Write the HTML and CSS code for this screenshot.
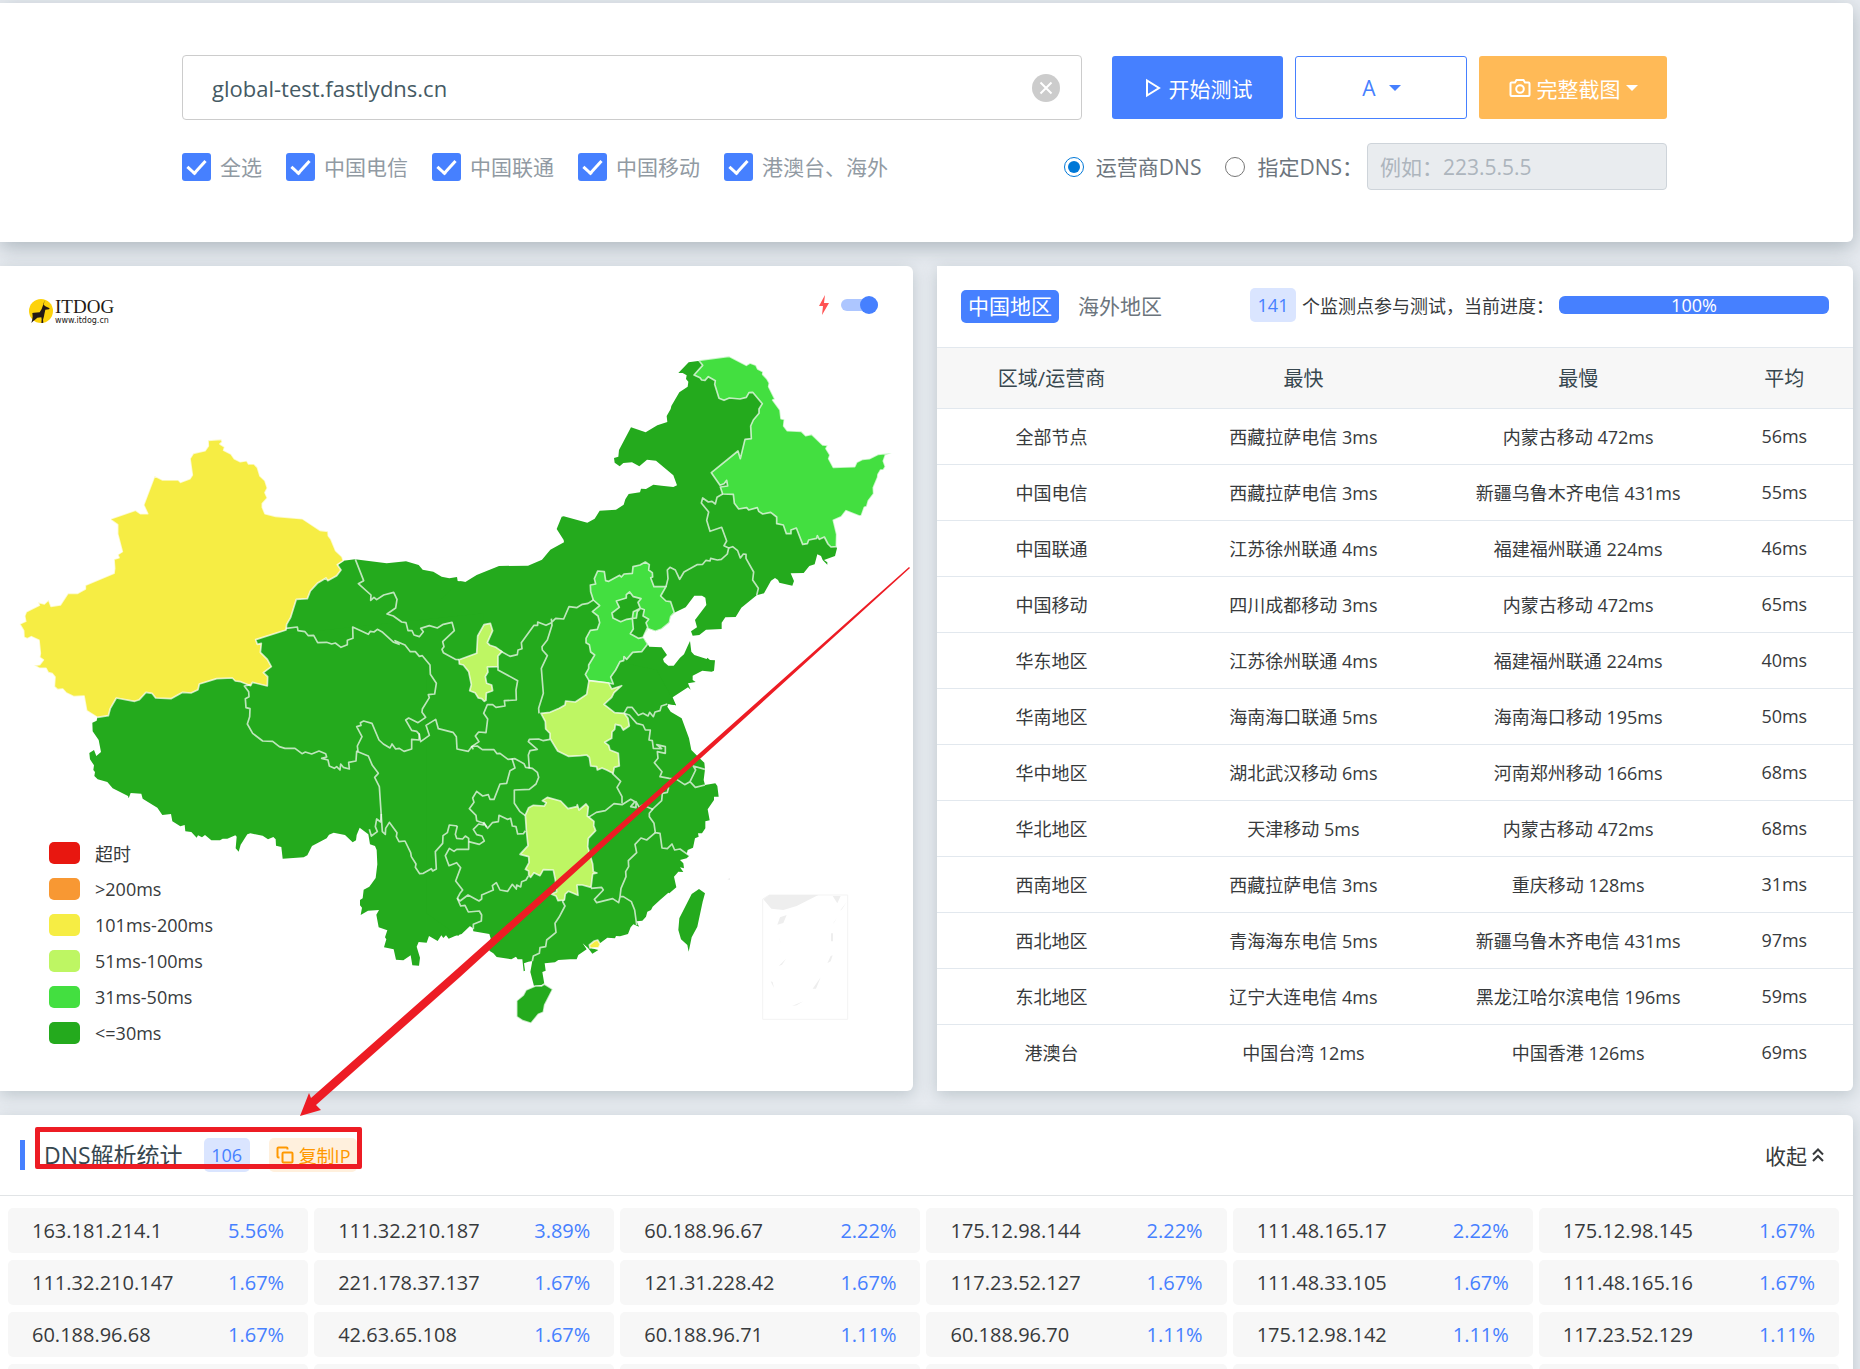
FILE: index.html
```html
<!doctype html>
<html lang="zh-CN">
<head>
<meta charset="utf-8">
<title>DNS测试 - ITDOG</title>
<link rel="stylesheet" href="styles.css">
</head>

<body>
<div class="page">

<form class="card search">
	<div class="row">
		<div class="host">
			<input type="text" class="host-input" value="global-test.fastlydns.cn" aria-label="域名">
			<button type="button" class="clear" aria-label="清空"><svg viewBox="0 0 28 28"><circle cx="14" cy="14" r="14"/><path d="M8.500 8.500l11 11M19.500 8.500l-11 11"/></svg></button>
		</div>
		<div class="btns">
			<button type="button" class="btn start"><svg class="ico" viewBox="0 0 20 20"><path d="M4 2.500v15l12-7.500z"/></svg>开始测试</button>
			<div class="type">
				<select aria-label="记录类型"><option>A</option></select>
				<svg class="caret" viewBox="0 0 12 6"><path d="M0 0h12L6 6z"/></svg>
			</div>
			<button type="button" class="btn shot"><svg class="ico" viewBox="0 0 22 20"><path d="M1.500 5.500a1 1 0 0 1 1-1H6L7.500 2h7L16 4.500h3.500a1 1 0 0 1 1 1V17a1 1 0 0 1-1 1h-17a1 1 0 0 1-1-1z"/><circle cx="11" cy="11" r="3.800"/></svg>完整截图<svg class="caret" viewBox="0 0 12 6"><path d="M0 0h12L6 6z"/></svg></button>
		</div>
	</div>
	<div class="row options">
		<div class="checks">
			<label><input type="checkbox" checked>全选</label>
			<label><input type="checkbox" checked>中国电信</label>
			<label><input type="checkbox" checked>中国联通</label>
			<label><input type="checkbox" checked>中国移动</label>
			<label><input type="checkbox" checked>港澳台、海外</label>
		</div>
		<div class="dns">
			<label><input type="radio" name="dns" checked>运营商DNS</label>
			<label><input type="radio" name="dns">指定DNS：</label>
			<input type="text" class="dns-input" placeholder="例如：223.5.5.5" aria-label="指定DNS" disabled>
		</div>
	</div>
</form>

<div class="cols">
	<div class="card map">
		<div class="map-top">
			<div class="logo">
				<svg viewBox="0 0 72 72"><circle cx="36" cy="36" r="36" fill="#fdd20a"/><path d="M47 3l-3 14 5 5 13 6-2 3-11 1-3 14-1 6-3 10 1 9-6 2 1-12-1-6-12 1-7 6-5 4-6 6 3-11 1-9-1-10 5-1 17-1 6-10 4-11z" fill="#231815"/></svg>
				<div class="logo-text"><b>ITDOG</b><span>www.itdog.cn</span></div>
			</div>
			<label class="speed">
				<svg viewBox="0 0 10 20"><path d="M6 0L0 11h4l-1 9 7-12H5z"/></svg>
				<input type="checkbox" aria-label="极速模式" checked>
			</label>
		</div>
		<svg class="china" viewBox="0 1020 2739 2253">
			<!-- mainland -->
			<g class="land c30">
				<path transform="translate(0 780)" d="M1030 902L1065 898 1160 910 1218 904 1256 915 1268 929 1300 935 1325 950 1348 955 1371 951 1373 963 1396 966 1500 1000 1500 1500 340 1480 292 1372 500 1200 900 1000z"/>
				<path transform="translate(1380 1020)" d="M0 724L16 726 50 705 117 678 204 677 246 659 271 629 312 607 311 600 290 567 305 530 311 529 382 548 404 536 419 512 468 509 491 494 496 478 506 462 540 457 543 446 558 447 580 434 605 437 640 441 651 436 640 406 588 362 561 359 538 379 516 367 490 369 479 379 464 368 462 354 475 350 477 330 513 262 557 277 592 256 622 246 620 228 632 207 634 198 658 157 683 140 685 125 678 117 680 106 668 99 655 99 686 67 714 63 780 62 900 150 930 230 1080 420 1129 620 1131 625 1125 648 1092 660 1102 667 1102 674 1088 660 1083 648 1072 643 1064 673 1048 678 1031 699 992 700 1002 723 997 737 958 728 954 720 945 714 933 722 912 760 890 766 844 803 827 831 796 832 785 848 785 867 738 869 718 885 698 887 693 874 711 862 705 840 739 795 736 773 726 767 703 767 677 802 646 817 632 830 628 848 605 867 586 874 565 866 549 890 563 912 568 920 605 922 621 945 609 957 612 966 625 977 641 977 660 953 672 943 682 920 690 903 694 935 703 945 740 957 742 953 750 960 765 961 762 992 755 995 727 992 698 1007 698 1020 707 1026 684 1030 692 1049 684 1042 638 1072 648 1096 625 1092 600 1130 -60 1130 -60 780z"/>
				<path transform="translate(0 2040)" d="M292 111L290 122 277 128 278 154 296 180 303 216 289 228 282 210 268 219 270 238 282 256 280 270 285 276 283 288 293 298 322 306 338 325 384 348 386 355 392 339 424 341 428 356 472 383 487 405 513 402 517 424 541 439 554 435 556 454 574 456 590 473 594 466 606 472 615 465 634 481 660 481 668 476 682 476 706 466 710 470 707 505 716 515 722 494 742 463 751 460 788 467 804 478 820 471 827 478 828 497 844 501 848 536 911 532 922 526 936 498 980 475 987 464 1001 458 1035 465 1058 487 1068 481 1070 465 1079 443 1105 463 1110 493 1125 498 1130 510 1132 553 1127 594 1108 620 1091 629 1088 655 1080 660 1080 676 1086 683 1082 705 1104 692 1137 690 1129 704 1136 742 1162 751 1155 772 1159 778 1152 802 1181 808 1188 839 1210 841 1232 826 1237 856 1257 857 1260 833 1250 800 1256 786 1280 788 1287 768 1313 783 1324 766 1330 774 1338 766 1346 776 1365 768 1385 762 1450 700 1450 -200 500 -100z"/>
				<path transform="translate(1380 2040)" d="M-5 768L8 745 25 735 38 744 40 754 88 762 92 775 88 812 100 820 110 831 154 838 168 830 173 838 187 838 191 874 195 872 192 850 205 845 217 843 211 876 222 918 246 915 253 912 247 876 257 872 254 850 285 847 295 840 330 838 350 838 355 825 380 808 368 790 384 804 397 821 415 810 395 805 420 790 442 773 465 775 468 768 480 769 504 762 512 742 520 733 537 740 530 724 547 722 558 710 562 695 573 690 578 680 600 660 625 638 628 640 649 622 642 590 655 575 670 576 660 562 672 565 670 550 660 540 680 535 688 527 680 522 683 510 699 503 705 475 716 470 714 460 726 460 736 445 736 424 749 421 743 388 762 360 762 350 776 350 772 318 766 310 735 315 731 300 735 268 733 248 709 225 694 210 687 175 665 115 632 95 622 80 625 72 648 76 590 -30 450 -60 -100 -60 -100 700z"/>
			</g>
			<!-- Xinjiang -->
			<path class="c200" transform="translate(0 780)" d="M624 541L664 538 667 546 660 552 674 561 671 571 693 582 703 596 721 605 740 602 746 612 762 612 772 622 780 648 795 662 802 684 795 698 802 714 787 731 787 742 795 761 827 769 907 776 960 811 984 814 985 827 993 838 1007 872 1026 890 1030 902 1012 914 1023 930 1010 947 983 962 978 954 952 970 931 993 922 1016 889 1018 872 1072 860 1093 858 1110 767 1139 772 1153 784 1150 781 1177 802 1198 814 1220 790 1238 803 1250 802 1278 757 1267 752 1277 722 1265 706 1263 697 1254 650 1256 598 1272 594 1289 573 1299 548 1297 513 1316 467 1314 456 1300 438 1297 418 1319 404 1324 349 1314 331 1345 325 1367 292 1372 260 1352 252 1308 222 1310 199 1299 188 1287 173 1289 163 1280 165 1251 157 1241 145 1238 138 1225 118 1225 102 1216 119 1214 130 1200 119 1192 121 1180 117 1141 94 1130 82 1136 72 1132 71 1112 59 1092 77 1084 74 1068 79 1055 118 1036 114 1027 133 1032 146 1020 153 1039 181 1035 204 1000 233 1000 256 987 256 976 342 940 344 925 342 898 357 893 353 884 367 875 353 822 353 794 333 780 333 776 407 751 421 761 443 761 431 735 464 648 488 660 535 660 542 667 570 656 577 645 570 596 580 580 615 572 625 558z"/>
			<g transform="translate(1380 1020)">
				<!-- Heilongjiang, Hebei, Beijing, Tianjin -->
				<path class="c50" d="M716 61L807 49 859 76 870 69 888 76 893 87 909 95 908 103 921 117 928 129 926 140 945 178 938 180 944 188 960 210 963 236 973 238 971 258 982 272 1024 274 1037 287 1055 283 1088 315 1103 316 1098 326 1110 345 1106 356 1120 382 1184 380 1190 367 1208 358 1228 356 1255 343 1295 339 1276 346 1270 363 1276 380 1270 390 1262 390 1254 403 1253 412 1240 443 1241 461 1225 482 1220 500 1213 502 1204 527 1198 528 1158 512 1144 530 1120 541 1130 583 1129 620 1113 621 1104 612 1093 591 1078 598 1072 587 1070 595 1046 600 1042 611 1028 613 1009 564 993 570 993 581 979 581 970 555 950 551 950 531 932 517 908 522 896 514 892 503 866 510 860 503 836 507 823 490 820 463 788 462 781 441 803 438 800 421 792 431 780 436 754 398 834 333 841 356 855 298 874 296 872 258 880 240 897 220 897 207 907 191 878 157 867 158 859 172 840 177 808 174 792 181 777 175 764 133 766 122 745 110 735 121 725 120 720 113 702 105 728 76z"/>
				<path class="c50" d="M413 693L433 695 437 722 446 724 479 706 484 711 492 702 517 700 519 680 540 675 556 666 568 674 566 690 577 698 578 711 572 713 582 740 618 740 602 768 618 783 632 785 643 818 632 830 628 848 605 867 586 874 565 866 549 890 563 912 545 935 518 937 500 958 492 950 491 962 480 965 467 990 452 1011 460 1032 446 1029 387 1022 376 1003 386 985 386 975 404 945 392 936 388 914 378 908 378 895 391 871 412 868 419 848 414 828 397 815 419 797 400 780 392 755 391 735 407 732 403 716z"/>
				<path class="c30 line" d="M509 756L520 770 543 776 534 787 541 805 520 815 517 835 500 838 482 845 459 834 456 819 478 802 469 783 499 774 499 764zM541 805L553 809 549 828 566 838 558 848 563 862 549 892 535 895 511 881 520 867 517 835 529 834 532 815z"/>
				<path class="line" d="M788 462L771 472 766 492 756 484 745 486 728 474 724 489 746 516 740 541 750 574 785 562 800 603 792 617 806 624 802 642 784 658 772 660 752 655 750 663 738 661 728 673 711 674 672 696 659 718 646 690 630 682 622 690 624 716 618 740"/>
				<path class="line" d="M806 624L818 620 833 632 841 654 850 642 858 643 858 655 881 696 878 720 895 745 890 766"/>
				<path class="line" d="M400 780L384 790 367 793 350 803 327 800 311 837 287 835 274 848 258 856 233 846 233 856 222 856 184 908 186 926 174 930 172 944 150 949 120 932M274 836L276 856 262 900 246 920 247 930 262 947 244 985 250 1060 236 1105 237 1120"/>
			</g>
			<!-- Gansu, Qinghai, Shaanxi, Sichuan, Chongqing -->
			<g transform="translate(810 1620)">
				<path class="line" d="M684 380L684 390 743 422 738 450 739 480 703 482 705 498 678 502 668 494 652 494 641 520 653 537 648 578 626 576 616 588 627 605 605 620 610 628"/>
				<path class="line" d="M256 58L281 122 265 131 303 165 302 181 312 172 320 179 341 165 371 157 381 178 377 204 351 222 370 228 395 246 408 248 414 272 426 272 432 285 448 290 460 275 452 265 478 257 502 264 520 253 546 247 553 272 518 305 522 320 516 328 520 338 556 358 567 359"/>
				<path class="line" d="M48 265L82 261 84 272 105 275 115 287 131 286 143 308 170 307 185 312 196 309 213 322 232 314 232 301 249 295 248 261 295 283 301 274 312 276 322 268 338 277 371 307 387 313 375 302 405 315 421 335 436 335 448 349 457 347 480 375 481 403 499 430 494 462 475 464 478 473 457 507 456 517 467 532 444 548 416 534 407 540 425 571 440 574 448 583 447 600 425 598 425 627 402 634 388 625 377 627 366 612 360 624 340 612 327 600 306 550 281 543 271 548 273 556 260 560 276 590 262 618 264 634"/>
				<path class="line" d="M447 580L452 605 478 586 468 556 497 538 505 566 549 577 559 590 561 627 595 634 605 620 622 618 637 629 672 629 681 641 690 640 714 658 735 656 762 671 767 682 787 685 802 697 806 712 798 732 778 748 733 750 733 790 750 815 766 827"/>
				<path class="line" d="M726 656L735 684 720 692 710 730 690 732 672 778 660 778 655 764 638 768 620 754 608 774 612 787 598 806 618 826 620 842 641 850 650 862M840 598L820 602 806 597 778 598 775 605 802 628 780 632 775 645 778 685"/>
				<path class="c100" d="M567 359L620 340 623 288 642 254 661 250 668 272 652 308 660 316 678 322 696 335 684 348 684 380 652 381 654 396 646 410 650 430 665 435 668 452 649 459 648 481 643 484 635 476 625 474 615 458 599 452 604 434 596 395 580 375 568 372z"/>
			</g>
			<!-- Tibet -->
			<path class="line" transform="translate(0 2040)" d="M752 14L733 18 746 35 747 50 736 56 738 83 750 86 749 110 742 132 758 160 788 183 818 184 838 200 855 205 885 205 906 221 916 216 935 222 957 213 977 221 980 231 965 235 984 240 988 258 1003 265 1010 260 1020 270 1022 252 1030 262 1048 267 1046 247 1068 243 1070 214 1105 228 1117 256 1135 280 1124 292 1138 320 1147 455 1156 463 1157 445 1168 427 1191 458 1189 470 1197 485 1215 483 1232 518 1234 530 1248 552 1246 562 1259 581 1270 580 1294 566 1298 573 1309 567 1306 515 1328 490 1329 467 1342 458 1348 435 1372 438"/>
			<!-- Yunnan, Guizhou -->
			<g class="line" transform="translate(1050 2370)">
				<path d="M94 72L92 96 80 87 76 110 82 125 64 138 58 118M322 108L316 133 320 145 338 147 346 138 356 145 356 178 320 178 312 184 298 175 286 197 297 227 320 218 332 233 317 273 338 300 330 310 322 325 330 333 354 315 387 333 395 327 395 315 430 300 427 287 439 278 450 300 473 304 487 283 499 297 500 285 512 291 515 275 528 270 535 258"/>
				<path d="M356 155L388 163 403 153 396 138 380 134 370 118 386 102 400 105 402 98 413 115 427 98 445 95 447 76 472 88 482 85 487 108 498 110 503 132 520 131 526 122M322 325L332 348 345 346 355 366 388 363 395 375 394 393 370 403 370 418"/>
			</g>
			<g transform="translate(1380 2040)">
				<path class="line" d="M313 655L308 665 315 678 297 712 285 730 288 757 260 780 257 800 240 803 238 820 220 828 217 843M457 280L482 304 471 322 486 350 486 370M385 412L409 397 436 392 462 371 486 374 512 358 525 365 512 380 528 383 528 365 538 382 548 375 578 388 568 400 568 410 582 430 586 458 600 460 606 504 622 506 636 492 644 510 660 507 688 527"/>
				<path class="line" d="M575 390L605 362 607 340 622 337 626 322M586 458L560 480 543 474 525 493 530 518 505 542 506 560 497 575 498 590 483 625 480 650 490 650 514 665 524 690 530 735M393 625L425 622 430 630 403 658 410 668 458 656 476 668 480 650"/>
				<path class="line" d="M492 100L508 105 530 130 549 135 556 150 571 150 567 180 577 182 580 205 605 206 590 194 616 200 616 220 592 215 594 235 583 248 606 275 600 290 628 295 650 298 674 314 690 305 706 322 735 315M492 100L502 82 516 82 535 106 549 100 564 108 569 97 580 110 585 96 600 92 604 78 622 72M690 305L707 270 700 258 735 268"/>
				<path class="c100" d="M243 100L270 97 298 85 315 75 317 63 346 66 380 43 387 2 446 9 455 27 485 17 462 38 455 52 432 73 464 98 492 100 504 115 508 138 490 150 482 137 466 133 464 148 456 156 455 175 434 187 446 196 450 210 475 220 478 258 463 262 459 280 440 270 426 264 412 270 410 260 392 258 388 232 380 225 362 227 325 229 293 213 270 175 270 160 257 147 256 125z"/>
				<path class="c100" d="M247 362L262 352 302 363 324 386 350 380 352 374 357 390 378 372 385 381 382 408 402 424 401 437 407 452 385 475 383 500 398 552 400 575 411 579 398 582 393 622 367 615 351 615 354 646 340 640 325 634 316 642 313 660 294 662 288 648 274 642 290 635 286 600 280 570 250 569 240 587 222 578 212 592 206 585 206 573 196 568 207 548 206 530 180 523 204 497 199 450 196 405 206 383 220 376 253 378 259 368z"/>
				<!-- Hainan, Taiwan, Hong Kong -->
				<path class="c30 line" d="M253 912L278 928 254 975 250 997 235 1003 213 1030 188 1022 170 1010 170 962 190 945 198 930 226 918 244 918z"/>
				<path class="c30" d="M717 627L735 640 728 665 712 740 695 772 686 815 682 795 663 778 655 750 658 715 695 642z"/>
				<path class="c200" d="M403 783L413 780 421 793 416 803 390 804 388 795z"/>
				<!-- South China Sea box -->
				<path class="sea-box" d="M908 657L928 645H1163V1018H908z"/>
				<path class="sea" d="M910 658L928 645H1075L1010 678 970 690 934 686zM1118 648h24l-10 22zM960 712l20-7-10 24-18 5zM1113 760h6v24h-6zM1140 692l20-26-14 22zM1118 732l14-20-10 16zM956 770l10 28-7-18zM956 858l22-22-12 18zM1102 850l10-22 6-2-6 18zM932 904l6 2 4 18zM1058 926l24-34-14 34zM996 978l34-14-20 12zM802 598l8-4v6z"/>
			</g>
		</svg>
		<ul class="legend">
			<li><i class="l-timeout"></i>超时</li>
			<li><i class="l-over"></i>&gt;200ms</li>
			<li><i class="l-200"></i>101ms-200ms</li>
			<li><i class="l-100"></i>51ms-100ms</li>
			<li><i class="l-50"></i>31ms-50ms</li>
			<li><i class="l-30"></i>&lt;=30ms</li>
		</ul>
	</div>

	<div class="card result">
		<div class="result-top">
			<a href="#china" class="tab active">中国地区</a>
			<a href="#oversea" class="tab">海外地区</a>
			<div class="status">
				<span class="badge">141</span>
				<span class="status-text">个监测点参与测试，当前进度：</span>
				<div class="progress"><div class="bar" style="width:100%">100%</div></div>
			</div>
		</div>
		<table>
			<thead>
				<tr><th class="c-area">区域/运营商</th><th class="c-fast">最快</th><th class="c-slow">最慢</th><th class="c-avg">平均</th></tr>
			</thead>
			<tbody>
				<tr><td>全部节点</td><td>西藏拉萨电信 3ms</td><td>内蒙古移动 472ms</td><td>56ms</td></tr>
				<tr><td>中国电信</td><td>西藏拉萨电信 3ms</td><td>新疆乌鲁木齐电信 431ms</td><td>55ms</td></tr>
				<tr><td>中国联通</td><td>江苏徐州联通 4ms</td><td>福建福州联通 224ms</td><td>46ms</td></tr>
				<tr><td>中国移动</td><td>四川成都移动 3ms</td><td>内蒙古移动 472ms</td><td>65ms</td></tr>
				<tr><td>华东地区</td><td>江苏徐州联通 4ms</td><td>福建福州联通 224ms</td><td>40ms</td></tr>
				<tr><td>华南地区</td><td>海南海口联通 5ms</td><td>海南海口移动 195ms</td><td>50ms</td></tr>
				<tr><td>华中地区</td><td>湖北武汉移动 6ms</td><td>河南郑州移动 166ms</td><td>68ms</td></tr>
				<tr><td>华北地区</td><td>天津移动 5ms</td><td>内蒙古移动 472ms</td><td>68ms</td></tr>
				<tr><td>西南地区</td><td>西藏拉萨电信 3ms</td><td>重庆移动 128ms</td><td>31ms</td></tr>
				<tr><td>西北地区</td><td>青海海东电信 5ms</td><td>新疆乌鲁木齐电信 431ms</td><td>97ms</td></tr>
				<tr><td>东北地区</td><td>辽宁大连电信 4ms</td><td>黑龙江哈尔滨电信 196ms</td><td>59ms</td></tr>
				<tr><td>港澳台</td><td>中国台湾 12ms</td><td>中国香港 126ms</td><td>69ms</td></tr>
			</tbody>
		</table>
	</div>
</div>

<div class="card stat">
	<div class="stat-top">
		<h2>DNS解析统计</h2>
		<span class="badge">106</span>
		<button type="button" class="copy"><svg viewBox="0 0 18 18"><path d="M7.500 6.500h8a1 1 0 0 1 1 1v8a1 1 0 0 1-1 1h-8a1 1 0 0 1-1-1v-8a1 1 0 0 1 1-1zM3.500 11.500h-1a1 1 0 0 1-1-1v-8a1 1 0 0 1 1-1h8a1 1 0 0 1 1 1v1"/></svg>复制IP</button>
		<button type="button" class="fold">收起<svg viewBox="0 0 12 14"><path d="M1 6.500l5-5 5 5M1 13l5-5 5 5"/></svg></button>
		<div class="mark"></div>
	</div>
	<ul class="ips">
		<li>163.181.214.1<span>5.56%</span></li>
		<li>111.32.210.187<span>3.89%</span></li>
		<li>60.188.96.67<span>2.22%</span></li>
		<li>175.12.98.144<span>2.22%</span></li>
		<li>111.48.165.17<span>2.22%</span></li>
		<li>175.12.98.145<span>1.67%</span></li>
		<li>111.32.210.147<span>1.67%</span></li>
		<li>221.178.37.137<span>1.67%</span></li>
		<li>121.31.228.42<span>1.67%</span></li>
		<li>117.23.52.127<span>1.67%</span></li>
		<li>111.48.33.105<span>1.67%</span></li>
		<li>111.48.165.16<span>1.67%</span></li>
		<li>60.188.96.68<span>1.67%</span></li>
		<li>42.63.65.108<span>1.67%</span></li>
		<li>60.188.96.71<span>1.11%</span></li>
		<li>60.188.96.70<span>1.11%</span></li>
		<li>175.12.98.142<span>1.11%</span></li>
		<li>117.23.52.129<span>1.11%</span></li>
		<li></li>
		<li></li>
		<li></li>
		<li></li>
		<li></li>
		<li></li>
	</ul>
</div>

<svg class="arrow" viewBox="0 0 610 550"><path d="M610 1L609 0 157 402 11 531 9 526 0 549 21 543 16 538 160 410z"/></svg>
</div>
</body>
</html>
```
FILE: styles.css
```css
*{margin:0;padding:0;box-sizing:border-box;list-style:none;}
body{background:#e7ebf0;color:#373a3c;font-family:"Open Sans","Noto Sans CJK SC",sans-serif;font-size:18px;}
input,select,button{font-family:inherit;font-size:21px;}
button{cursor:pointer;border:0;background:none;}
a{text-decoration:none;}

.page{position:relative;height:100vh;overflow:hidden;padding:3px 7px 0 0;}
.card{background:#fff;border-radius:0 6px 6px 0;box-shadow:0 4px 16px 0 rgba(69,90,100,.25);}

/* search */
.search{padding:52px 186px 52px 182px;margin-bottom:24px;box-shadow:0 6px 20px 0 rgba(69,90,100,.35);}
.row{display:flex;align-items:center;justify-content:space-between;gap:30px;}
.host{position:relative;flex:1;}
.host-input{display:block;width:100%;height:65px;padding:0 80px 0 29px;border:1px solid #ccc;border-radius:4px;color:#455a64;font-size:22px;outline:0;}
.clear{position:absolute;right:22px;top:19px;width:28px;height:28px;}
.clear svg{display:block;}
.clear circle{fill:#ccc;}
.clear path{stroke:#fff;stroke-width:2;}
.btns{display:flex;gap:12px;}
.btn{display:flex;align-items:center;justify-content:center;height:63px;border-radius:3px;color:#fff;}
.start{width:171px;background:#4680ff;}
.shot{width:188px;background:#ffba57;}
.ico{height:20px;margin-right:6px;fill:none;stroke:#fff;stroke-width:2;}
.caret{width:12px;height:6px;fill:#4680ff;}
.shot .caret{margin-left:5px;fill:#fff;}
.type{position:relative;width:172px;}
.type select{width:100%;height:63px;padding-right:24px;border:1px solid #4680ff;border-radius:3px;background:#fff;color:#4680ff;appearance:none;text-align:center;text-align-last:center;}
.type .caret{position:absolute;right:66px;top:29px;}

.options{margin-top:23px;}
.checks,.dns{display:flex;align-items:center;gap:24px;font-size:21px;}
.checks{color:#919aa3;}
.checks label,.dns label{display:flex;align-items:center;line-height:32px;}
.checks input{appearance:none;width:29px;height:28px;margin-right:9px;border-radius:3px;background:#4680ff;display:grid;place-items:center;}
.checks input:before{content:"";width:8px;height:15px;margin-bottom:4px;border:solid #fff;border-width:0 3px 3px 0;transform:rotate(42deg);}
.dns{color:#6c757d;}
.dns label input{width:20px;height:20px;margin-right:12px;accent-color:#0078d7;}
.dns-input{width:300px;height:47px;margin-left:-20px;padding:0 12px;border:1px solid #ced4da;border-radius:4px;background:#e9ecef;}
.dns-input::placeholder{color:#adb5bd;}

/* map */
.cols{display:grid;grid-template-columns:913fr 916fr;gap:24px;margin-bottom:24px;}
.map{position:relative;}
.map-top{display:flex;justify-content:space-between;height:74px;padding:30px 35px 0 29px;}
.logo{display:flex;height:30px;align-items:center;gap:2px;}
.logo svg{width:24px;height:24px;}
.logo-text b,.logo-text span{display:block;color:#231815;}
.logo-text b{font:19px/20px "Liberation Serif",serif;}
.logo-text span{font:8px/8px "DejaVu Sans",sans-serif;}
.speed{display:flex;align-items:center;gap:12px;height:18px;}
.speed svg{width:10px;height:20px;fill:#ff5252;}
.speed input{appearance:none;display:flex;align-items:center;justify-content:flex-end;width:37px;height:12px;border-radius:6px;background:#adc6ff;}
.speed input:before{content:"";width:18px;height:18px;border-radius:50%;background:#4680ff;flex:none;}
.china{display:block;width:100%;}
.china path{stroke-linejoin:round;}
.c30{fill:#24aa1d;}
.c50,.c100,.c200,.line{stroke:rgba(255,255,255,.7);stroke-width:5;}
.c50{fill:#43df40;}
.c100{fill:#bef663;}
.c200{fill:#f6ed44;}
.line:not(.c30){fill:none;}
.sea-box{fill:none;stroke:#f3f3f3;stroke-width:3;}
.sea{fill:#eee;}
.legend{position:absolute;left:49px;bottom:40px;}
.legend li{display:flex;align-items:center;height:36px;gap:15px;}
.legend i{width:31px;height:22px;border-radius:5px;}
.l-timeout{background:#e81710;}
.l-over{background:#f89833;}
.l-200{background:#f6ed44;}
.l-100{background:#bef663;}
.l-50{background:#43df40;}
.l-30{background:#24aa1d;}

/* result */
.result-top{display:flex;align-items:center;height:81px;padding:0 24px;}
.tab{height:33px;margin-right:12px;padding:0 7px;border-radius:5px;color:#6c757d;font-size:21px;line-height:32px;}
.tab.active{background:#4680ff;color:#fff;}
.status{display:flex;align-items:center;margin:0 0 3px auto;}
.badge{width:46px;height:34px;border-radius:5px;background:#dae5ff;color:#4680ff;line-height:34px;text-align:center;}
.status-text{margin:0 5px 0 6px;}
.progress{width:270px;height:18px;border-radius:6px;background:#e9ecef;}
.bar{height:18px;border-radius:6px;background:#4680ff;color:#fff;line-height:18px;text-align:center;}
table{width:100%;border-collapse:collapse;table-layout:fixed;text-align:center;}
th{height:61px;padding-bottom:2px;border:solid #e2e8ee;border-width:1px 0;background:#f7f7f7;color:#37474f;font-size:20px;font-weight:400;}
td{height:56px;padding-bottom:2px;border-bottom:1px solid #e2e8ee;}
tr:last-child td{border-bottom:0;}
.c-area{width:25%;}
.c-fast{width:30%;}
.c-slow{width:30%;}
.c-avg{width:15%;}

/* dns stat */
.stat-top{position:relative;display:flex;align-items:center;height:81px;padding:0 29px 0 20px;border-bottom:1px solid #e1e4e6;}
.stat-top h2{padding-left:19px;margin-right:21px;border-left:5px solid #4680ff;color:#37474f;font-size:23px;font-weight:400;line-height:30px;}
.copy{display:flex;align-items:center;gap:5px;height:34px;margin-left:19px;padding:0 7px;border-radius:5px;background:#fff0dd;color:#ff9800;font-size:18px;}
.copy svg{width:18px;height:18px;fill:none;stroke:#ff9800;stroke-width:2;}
.fold{display:flex;align-items:center;gap:5px;margin-left:auto;color:#373a3c;}
.fold svg{width:12px;height:14px;fill:none;stroke:#373a3c;stroke-width:2;}
.mark{position:absolute;left:35px;top:12px;width:327px;height:42px;border:5px solid #ed1c24;border-radius:2px;}
.ips{display:grid;grid-template-columns:repeat(6,1fr);gap:7px 6px;padding:12px 14px 20px 8px;}
.ips li{display:flex;align-items:center;justify-content:space-between;height:45px;padding:0 24px;border-radius:5px;background:#f7f7f7;font-size:20px;}
.ips span{color:#4680ff;}

.arrow{position:absolute;left:300px;top:567px;width:610px;height:550px;fill:#ed1c24;pointer-events:none;}
```
